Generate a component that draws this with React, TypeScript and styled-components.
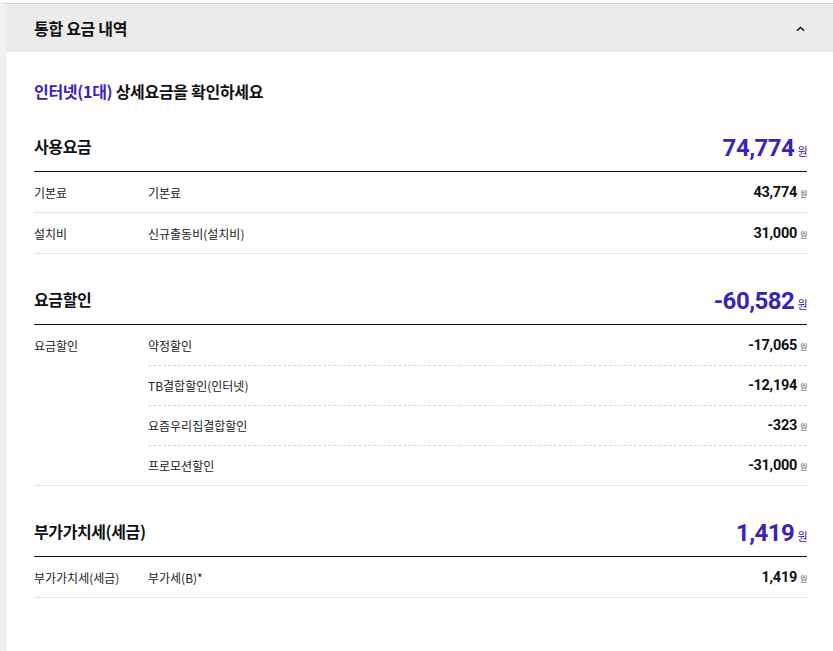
import styled, { createGlobalStyle } from "styled-components";

const GlobalStyle = createGlobalStyle`
  html, body {
    margin: 0;
    padding: 0;
    background: #ffffff;
  }
  body {
    font-family: "Noto Sans CJK KR", "Noto Sans", sans-serif;
    color: #111;
  }
`;

type Item = { name: string; amount: string };
type Group = { label: string; items: Item[] };
type Section = { title: string; total: string; groups: Group[]; dashed?: boolean };

const sections: Section[] = [
  {
    title: "사용요금",
    total: "74,774",
    groups: [
      { label: "기본료", items: [{ name: "기본료", amount: "43,774" }] },
      { label: "설치비", items: [{ name: "신규출동비(설치비)", amount: "31,000" }] },
    ],
  },
  {
    title: "요금할인",
    total: "-60,582",
    dashed: true,
    groups: [
      {
        label: "요금할인",
        items: [
          { name: "약정할인", amount: "-17,065" },
          { name: "TB결합할인(인터넷)", amount: "-12,194" },
          { name: "요즘우리집결합할인", amount: "-323" },
          { name: "프로모션할인", amount: "-31,000" },
        ],
      },
    ],
  },
  {
    title: "부가가치세(세금)",
    total: "1,419",
    groups: [
      { label: "부가가치세(세금)", items: [{ name: "부가세(B)*", amount: "1,419" }] },
    ],
  },
];

export default function App() {
  return (
    <>
      <GlobalStyle />
      <Page>
        <Panel>
          <PanelHead>
            <PanelTitle>통합 요금 내역</PanelTitle>
            <ToggleIcon viewBox="0 0 10 6" aria-hidden>
              <path d="M1 5 L5 1.2 L9 5" fill="none" stroke="#111" strokeWidth="1.6" />
            </ToggleIcon>
          </PanelHead>
          <PanelBody>
            <Intro>
              <Accent>인터넷(1대)</Accent> 상세요금을 확인하세요
            </Intro>
            {sections.map((s) => (
              <Block key={s.title}>
                <BlockHead>
                  <BlockTitle>{s.title}</BlockTitle>
                  <Total>
                    {s.total}
                    <TotalUnit>원</TotalUnit>
                  </Total>
                </BlockHead>
                {s.groups.map((g) => (
                  <GroupRow key={g.label}>
                    <GroupLabel>{g.label}</GroupLabel>
                    <ItemList>
                      {g.items.map((it) => (
                        <ItemRow key={it.name} $dashed={!!s.dashed}>
                          <ItemName>{it.name}</ItemName>
                          <ItemAmount>
                            {it.amount}
                            <ItemUnit>원</ItemUnit>
                          </ItemAmount>
                        </ItemRow>
                      ))}
                    </ItemList>
                  </GroupRow>
                ))}
              </Block>
            ))}
          </PanelBody>
        </Panel>
      </Page>
    </>
  );
}

const Page = styled.div`
  min-height: 651px;
  padding-top: 3px;
  background: #fafafa;
  display: flex;
`;

const Panel = styled.div`
  flex: 1;
  border-top: 1px solid #d0d0d0;
  border-left: 7px solid #f1f1f1;
  background: #fff;
`;

const PanelHead = styled.div`
  height: 48px;
  background: #ebebeb;
  display: flex;
  align-items: center;
  justify-content: space-between;
  padding: 0 28px 0 27px;
`;

const PanelTitle = styled.h2`
  margin: 0;
  font-size: 16px;
  font-weight: 700;
  color: #111;
  letter-spacing: -0.3px;
`;

const ToggleIcon = styled.svg`
  width: 9px;
  height: 6px;
  margin-top: 2px;
`;

const PanelBody = styled.div`
  padding: 27px 26px 40px 27px;
`;

const Intro = styled.p`
  margin: 0;
  font-size: 16px;
  line-height: 24px;
  font-weight: 700;
  color: #111;
  letter-spacing: -0.3px;
`;

const Accent = styled.span`
  color: #3b22b8;
`;

const Block = styled.section`
  margin-top: 19px;
  &:first-of-type {
    margin-top: 17px;
  }
`;

const BlockHead = styled.div`
  height: 51px;
  display: flex;
  align-items: center;
  justify-content: space-between;
  border-bottom: 1px solid #111;
`;

const BlockTitle = styled.h3`
  margin: 0;
  font-size: 16px;
  font-weight: 700;
  color: #111;
  letter-spacing: -0.4px;
`;

const Total = styled.div`
  display: flex;
  align-items: baseline;
  margin-top: 4px;
  font-family: Roboto, "Noto Sans", sans-serif;
  font-size: 24px;
  font-weight: 700;
  color: #3b22b8;
  letter-spacing: -0.5px;
`;

const TotalUnit = styled.span`
  margin-left: 3px;
  font-family: "Noto Sans CJK KR", sans-serif;
  font-size: 11px;
  font-weight: 400;
  color: #3b22b8;
`;

const GroupRow = styled.div`
  display: grid;
  grid-template-columns: 114px 1fr;
  border-bottom: 1px solid #e3e3e3;
`;

const GroupLabel = styled.div`
  height: 40px;
  display: flex;
  align-items: center;
  font-size: 12px;
  color: #222;
`;

const ItemList = styled.div`
  display: flex;
  flex-direction: column;
`;

const ItemRow = styled.div<{ $dashed: boolean }>`
  box-sizing: border-box;
  height: 40px;
  display: flex;
  align-items: center;
  justify-content: space-between;
  & + & {
    border-top: 1px ${(p) => (p.$dashed ? "dashed #d6d6d6" : "solid #e3e3e3")};
  }
`;

const ItemName = styled.span`
  font-size: 12px;
  color: #222;
`;

const ItemAmount = styled.span`
  display: flex;
  align-items: baseline;
  font-family: Roboto, "Noto Sans", sans-serif;
  font-size: 14.5px;
  font-weight: 700;
  color: #111;
  letter-spacing: -0.3px;
`;

const ItemUnit = styled.span`
  margin-left: 3px;
  font-family: "Noto Sans CJK KR", sans-serif;
  font-size: 8px;
  font-weight: 400;
  color: #555;
`;
